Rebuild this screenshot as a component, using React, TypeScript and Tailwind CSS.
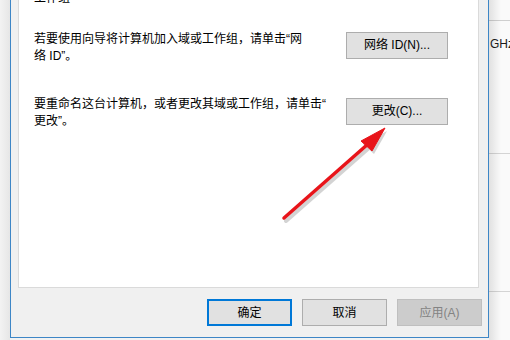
const font = "font-['Liberation_Sans','Noto_Sans_CJK_SC',sans-serif]";

function Btn({
  label,
  variant = "normal",
  className = "",
}: {
  label: string;
  variant?: "normal" | "default" | "disabled";
  className?: string;
}) {
  const styles =
    variant === "default"
      ? "border-2 border-[#0078d7] bg-[#e1e1e1] text-black"
      : variant === "disabled"
      ? "border border-[#bfbfbf] bg-[#cccccc] text-[#838383]"
      : "border border-[#adadad] bg-[#e1e1e1] text-black";
  return (
    <div
      className={`flex h-[27px] shrink-0 items-center justify-center text-[12px] ${styles} ${className}`}
    >
      {label}
    </div>
  );
}

function Arrow() {
  return (
    <svg
      className="pointer-events-none absolute left-0 top-0"
      width="510"
      height="340"
      viewBox="0 0 510 340"
    >
      {/* shadow */}
      <g opacity="0.25" transform="translate(2 3)">
        <path d="M284 218 L368 144" stroke="#555" strokeWidth="4" strokeLinecap="round" />
        <path d="M385 128 L361 141 L372 151 Z" fill="#555" />
      </g>
      <path d="M284 218 L368 144" stroke="#e8141a" strokeWidth="3.5" strokeLinecap="round" />
      <path d="M385 128 L361 141 L372 151 Z" fill="#e8141a" stroke="#e8141a" strokeWidth="1" strokeLinejoin="round" />
    </svg>
  );
}

export default function App() {
  return (
    <div className={`relative flex h-[340px] w-[510px] overflow-hidden bg-[#f2f2f2] ${font}`}>
      {/* window behind, left edge */}
      <div className="h-full w-[10px] shrink-0 bg-gradient-to-r from-[#f3f3f3] to-[#e6e6e6]" />

      {/* dialog */}
      <div className="flex h-[338px] w-[479px] shrink-0 flex-col border-x border-b border-[#3d86c6] bg-[#f0f0f0]">
        <div className="ml-[7px] mr-[9px] h-[288px] border-x border-b border-[#dadada] bg-white pl-[15px] text-[12px] leading-[17px] text-black">
          <div className="-mt-[10px] h-[17px]">工作组</div>

          <div className="mt-[24px] flex items-start">
            <p className="w-[312px] shrink-0">
              若要使用向导将计算机加入域或工作组，请单击“网
              <br />
              络 ID”。
            </p>
            <Btn label="网络 ID(N)..." className="mt-[1px] w-[102px]" />
          </div>

          <div className="mt-[31px] flex items-start">
            <p className="w-[312px] shrink-0">
              要重命名这台计算机，或者更改其域或工作组，请单击“
              <br />
              更改”。
            </p>
            <Btn label="更改(C)..." className="mt-[2px] w-[102px]" />
          </div>
        </div>

        <div className="mt-[11px] flex justify-end gap-[10px] pr-[6px]">
          <Btn label="确定" variant="default" className="w-[85px]" />
          <Btn label="取消" className="w-[85px]" />
          <Btn label="应用(A)" variant="disabled" className="w-[85px]" />
        </div>
      </div>

      {/* window behind, right edge */}
      <div className="relative flex min-w-0 flex-1 flex-col overflow-hidden bg-[#fafafa]">
        <div className="h-[21px] border-b border-[#cfcfcf]" />
        <div className="h-[133px] whitespace-nowrap border-b border-[#d4d4d4] pl-[1px] pt-[15px] text-[12px] leading-[16px] text-[#1a1a1a]">
          GHz
        </div>
        <div className="h-[138px] border-b border-[#d4d4d4]" />
        <div className="pointer-events-none absolute inset-y-0 left-0 w-[12px] bg-gradient-to-r from-black/10 to-transparent" />
      </div>

      <Arrow />
    </div>
  );
}
